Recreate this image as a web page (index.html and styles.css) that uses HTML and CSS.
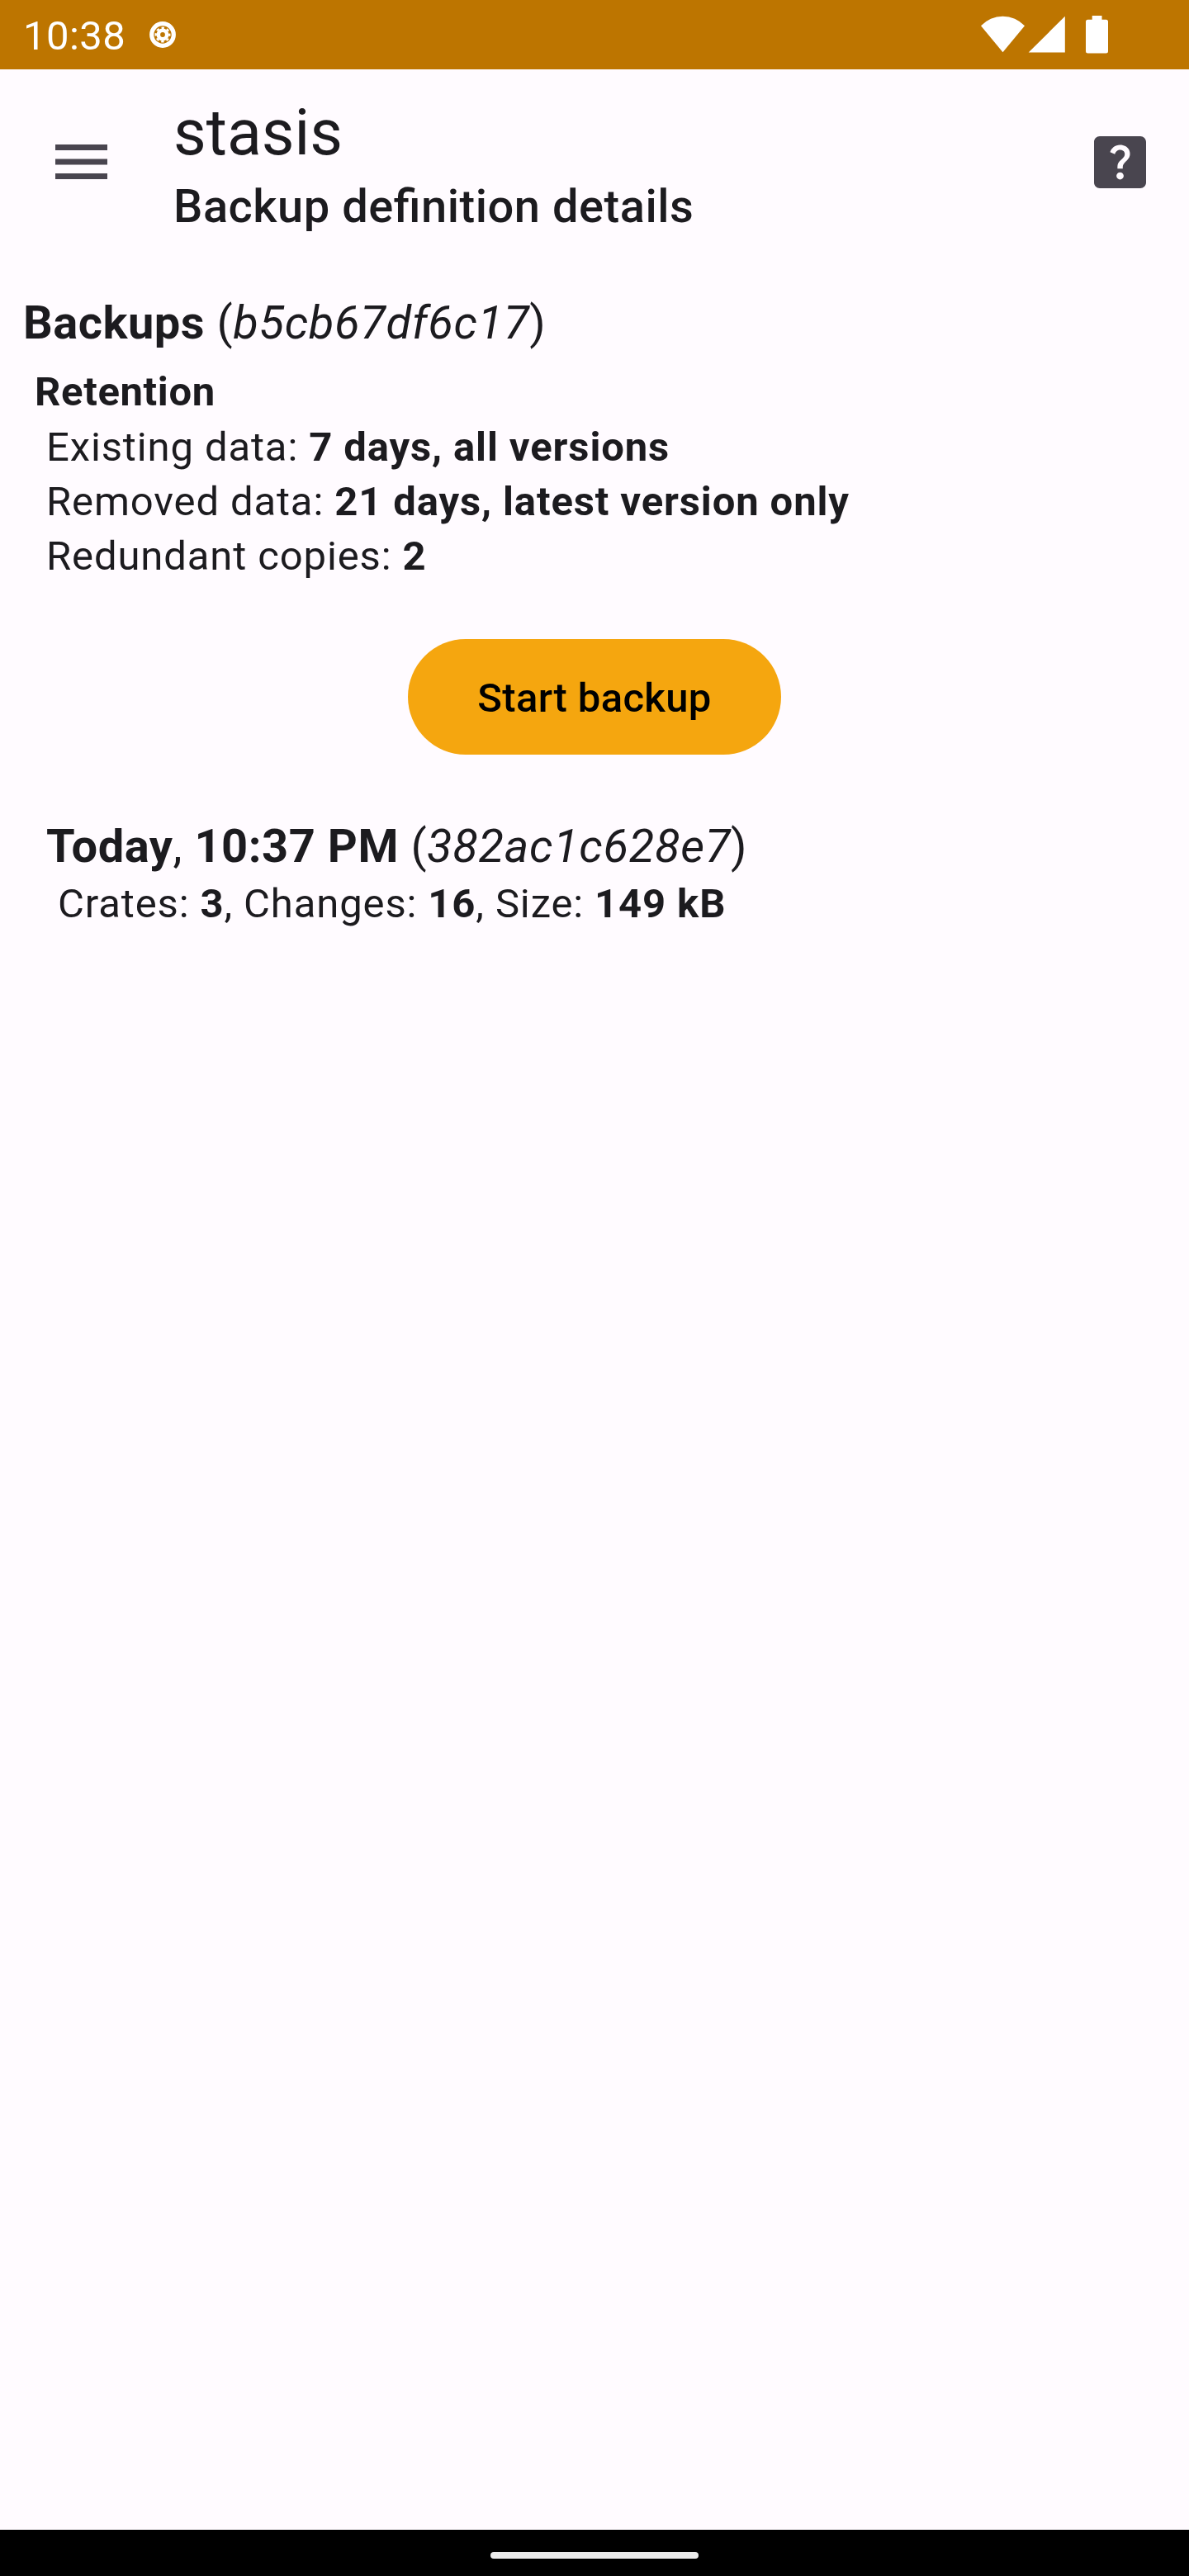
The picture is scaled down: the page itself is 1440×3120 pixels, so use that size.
FILE: index.html
```html
<!DOCTYPE html>
<html lang="en">
<head>
<meta charset="utf-8">
<title>stasis</title>
<link rel="stylesheet" href="styles.css">
</head>
<body>
<header class="status">
  <span class="clock">10:38</span>
  <svg class="debug" width="34" height="34" viewBox="0 0 34 34" fill="none" stroke="#fff"><circle cx="17" cy="17" r="13.3" stroke-width="5.2"/><circle cx="17" cy="17" r="5.2" stroke-width="4.6"/><circle cx="17" cy="17" r="8.3" stroke-width="2.4" stroke-dasharray="3.4 3.119" stroke-dashoffset="1.7"/></svg>
  <svg class="signals" width="160" height="50" viewBox="0 0 160 50" fill="#fff"><path d="M0 14.3A36 36 0 0 1 53 14.3L26.5 46.3Z"/><path d="M101.8 2.7V46.5H57.7Z"/><path d="M134.7 2h11.8v4.8h5a2.5 2.5 0 0 1 2.5 2.5v35.8a2.5 2.5 0 0 1-2.5 2.5h-22a2.5 2.5 0 0 1-2.5-2.5V9.300a2.5 2.5 0 0 1 2.5-2.5h5.200z"/></svg>
</header>
<div class="appbar">
  <svg class="menu" width="63" height="42" viewBox="3 6 18 12" fill="#49454f"><path d="M3 18h18v-2H3v2zm0-5h18v-2H3v2zm0-7v2h18V6H3z"/></svg>
  <div class="titles"><h1>stasis</h1><h2>Backup definition details</h2></div>
  <svg class="help" width="63" height="63" viewBox="3 3 18 18" fill="#49454f"><path d="M19 3H5c-1.100 0-2 .9-2 2v14c0 1.100.9 2 2 2h14c1.100 0 2-.9 2-2V5c0-1.100-.9-2-2-2zm-6.990 15c-.7 0-1.260-.56-1.260-1.260 0-.71.56-1.250 1.260-1.250.71 0 1.250.54 1.250 1.250-.01.69-.54 1.260-1.250 1.260zm3.010-7.400c-.76 1.110-1.480 1.460-1.870 2.170-.16.29-.22.48-.22 1.410h-1.820c0-.49-.08-1.290.31-1.980.49-.87 1.420-1.390 1.960-2.160.57-.81.25-2.330-1.370-2.330-1.060 0-1.580.8-1.800 1.480l-1.650-.7C9.010 7.150 10.220 6 11.990 6c1.480 0 2.490.67 3.010 1.520.44.72.7 2.070.02 3.080z"/></svg>
</div>
<main>
  <h3 class="definition"><b>Backups</b> (<i>b5cb67df6c17</i>)</h3>
  <section class="retention">
    <h4>Retention</h4>
    <p>Existing data: <b>7 days, all versions</b></p>
    <p>Removed data: <b>21 days, latest version only</b></p>
    <p>Redundant copies: <b>2</b></p>
  </section>
  <button class="start">Start backup</button>
  <section class="entry">
    <h3><b>Today</b>, <b>10:37 PM</b> (<i>382ac1c628e7</i>)</h3>
    <p>Crates: <b>3</b>, Changes: <b>16</b>, Size: <b>149 kB</b></p>
  </section>
</main>
<footer class="nav"><div class="handle"></div></footer>
</body>
</html>
```
FILE: styles.css
```css
* {
  box-sizing: border-box;
  margin: 0;
  padding: 0;
}

body {
  width: 1440px;
  height: 3120px;
  display: flex;
  flex-direction: column;
  background: #fffbff;
  color: #1c1b1f;
  font-family: Roboto, sans-serif;
}

.status {
  height: 84px;
  background: #bd7500;
  color: #fff;
  display: flex;
  align-items: center;
  padding: 0 92px 0 28px;
}

.clock {
  font-size: 49px;
  line-height: 80px;
  padding-top: 4px;
  letter-spacing: 0.44px;
}

.debug {
  margin-left: 28px;
}

.signals {
  margin-left: auto;
}

.appbar {
  height: 224px;
  display: flex;
  align-items: center;
  padding: 0 52.5px 0 66.5px;
}

.titles {
  align-self: flex-start;
  margin: 28px 0 0 80.5px;
  flex: 1;
}

h1 {
  font-size: 77px;
  font-weight: 400;
  line-height: 98px;
}

h2 {
  font-size: 56px;
  font-weight: 500;
  line-height: 80px;
  letter-spacing: 0.525px;
  font-feature-settings: "liga" 1;
}

main {
  flex: 1;
  display: flex;
  flex-direction: column;
}

h3 {
  font-size: 56px;
  font-weight: 400;
  line-height: 74px;
  letter-spacing: 0.525px;
}

h3 i {
  letter-spacing: 0.7px;
}

b {
  font-weight: 700;
}

.definition {
  padding: 46px 28px 5px;
}

.retention {
  padding: 8px 42px 0;
}

h4 {
  font-size: 49px;
  font-weight: 700;
  line-height: 68px;
  letter-spacing: 0.65px;
}

p {
  font-size: 49px;
  line-height: 66px;
  letter-spacing: 0.875px;
  padding-left: 14px;
}

.start {
  align-self: center;
  margin-top: 67px;
  width: 452px;
  height: 140px;
  padding-top: 4px;
  border: 0;
  border-radius: 70px;
  background: #f5a60f;
  color: #000;
  font: 500 49px/136px Roboto, sans-serif;
  letter-spacing: 0.35px;
}

.entry {
  padding: 74px 56px 0;
}

.nav {
  height: 56px;
  padding-top: 6px;
  background: #000;
  display: flex;
  justify-content: center;
  align-items: center;
}

.handle {
  width: 252px;
  height: 8px;
  border-radius: 4px;
  background: #ebebeb;
}
```
